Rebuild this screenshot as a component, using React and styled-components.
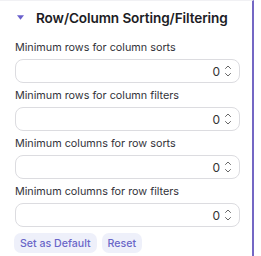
import React, { useState } from "react";
import styled, { createGlobalStyle } from "styled-components";

const GlobalStyle = createGlobalStyle`
  html, body {
    margin: 0;
    padding: 0;
    background: #fff;
    font-family: Inter, "Noto Sans", sans-serif;
  }
`;

const fields = [
  "Minimum rows for column sorts",
  "Minimum rows for column filters",
  "Minimum columns for row sorts",
  "Minimum columns for row filters",
];

const App = () => {
  const [values, setValues] = useState(fields.map(() => "0"));

  const update = (i, v) => {
    const next = [...values];
    next[i] = v;
    setValues(next);
  };

  return (
    <>
      <GlobalStyle />
      <Panel>
        <Header>
          <Caret viewBox="0 0 8 5">
            <path d="M0 0 H8 L4 5 Z" fill="#6a60cc" />
          </Caret>
          <Title>Row/Column Sorting/Filtering</Title>
        </Header>
        {fields.map((label, i) => (
          <Field key={label}>
            <Label>{label}</Label>
            <NumberBox>
              <Input
                type="text"
                value={values[i]}
                onChange={(e) => update(i, e.target.value)}
              />
              <Spinner viewBox="0 0 8 14">
                <path
                  d="M1.5 4.5 L4 2 L6.5 4.5 M1.5 9.5 L4 12 L6.5 9.5"
                  fill="none"
                  stroke="#666"
                  strokeWidth="1"
                  strokeLinecap="round"
                  strokeLinejoin="round"
                />
              </Spinner>
            </NumberBox>
          </Field>
        ))}
        <Actions>
          <GhostButton>Set as Default</GhostButton>
          <GhostButton>Reset</GhostButton>
        </Actions>
      </Panel>
    </>
  );
};

const Panel = styled.div`
  width: 254px;
  height: 256px;
  box-sizing: border-box;
  padding: 0 12px 0 15px;
  border-top: 1px solid #f1f1f4;
  border-right: 2px solid #7467c4;
  display: flex;
  flex-direction: column;
`;

const Header = styled.div`
  display: flex;
  align-items: center;
  height: 33px;
  gap: 12px;
  padding-left: 2px;
`;

const Caret = styled.svg`
  width: 7px;
  height: 5px;
  flex: none;
`;

const Title = styled.h2`
  margin: 0;
  font-size: 13.6px;
  font-weight: 600;
  color: #1c1c24;
  white-space: nowrap;
  letter-spacing: -0.1px;
`;

const Field = styled.div`
  display: flex;
  flex-direction: column;
  margin-top: 7px;
  & + & {
    margin-top: 6px;
  }
`;

const Label = styled.label`
  font-size: 10.8px;
  color: #33333a;
  line-height: 14px;
  margin-bottom: 4px;
  white-space: nowrap;
`;

const NumberBox = styled.div`
  display: flex;
  align-items: center;
  width: 225px;
  height: 24px;
  box-sizing: border-box;
  border: 1px solid #dcdce0;
  border-radius: 8px;
  padding: 0 7px 0 8px;
  background: #fff;
`;

const Input = styled.input`
  flex: 1;
  min-width: 0;
  border: none;
  outline: none;
  background: transparent;
  text-align: right;
  font-family: Inter, "Noto Sans", sans-serif;
  font-size: 12px;
  color: #333;
  padding: 0 4px 0 0;
`;

const Spinner = styled.svg`
  width: 8px;
  height: 14px;
  flex: none;
`;

const Actions = styled.div`
  display: flex;
  gap: 5px;
  margin-top: 6px;
  margin-left: -1px;
`;

const GhostButton = styled.button`
  height: 20px;
  padding: 0 6px;
  border: none;
  border-radius: 7px;
  background: #eef0fa;
  color: #6a66c8;
  font-family: Inter, "Noto Sans", sans-serif;
  font-size: 10.6px;
  font-weight: 500;
  cursor: pointer;
`;

export default App;
